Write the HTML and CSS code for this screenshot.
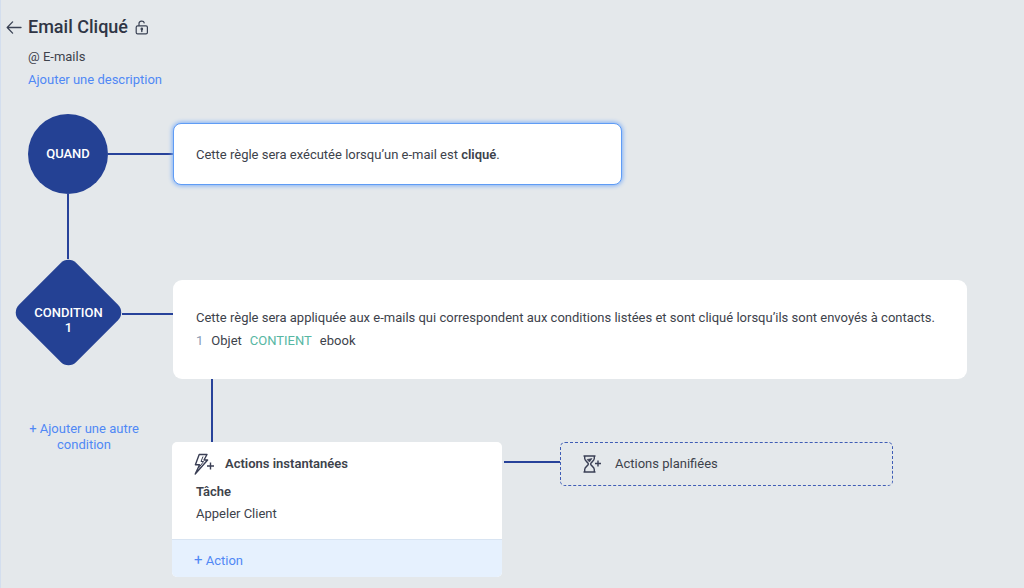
FILE: index.html
```html
<!DOCTYPE html>
<html lang="fr">
<head>
<meta charset="utf-8">
<meta name="viewport" content="width=device-width, initial-scale=1">
<title>Email Cliqué</title>
<link rel="stylesheet" href="styles.css">
</head>
<body>
<header class="header">
  <div class="title-row">
    <button class="icon-button" type="button" aria-label="Retour">
      <svg width="16" height="14" viewBox="0 0 16 14" fill="none" stroke="#3a4254" stroke-width="1.3" stroke-linecap="round" stroke-linejoin="round"><path d="M15 7.500H1.200M6.600 1.900 1.200 7.500l5.400 5.600"/></svg>
    </button>
    <h1 class="title">Email Cliqué</h1>
    <svg class="lock" width="14" height="15" viewBox="0 0 14 15" fill="none" stroke="#3a4254" stroke-width="1.2" stroke-linecap="round"><rect x="1.2" y="5.8" width="11.2" height="8" rx="1.4"/><path d="M4 5.6V3.6C4 .3 8.900.3 9.200 2.900"/><path d="M6.800 9.400v2.200" stroke-width="1.400"/><circle cx="6.800" cy="8.900" r=".7"/></svg>
  </div>
  <p class="module">@ E-mails</p>
  <a class="link description" href="#">Ajouter une description</a>
</header>
<main class="flow">
  <section class="row row-when">
    <div class="circle">QUAND</div>
    <div class="line-h line-when"></div>
    <div class="card card-when">Cette règle sera exécutée lorsqu’un e-mail est <b>cliqué</b>.</div>
  </section>
  <div class="line-v line-down"></div>
  <section class="row row-condition">
    <div class="diamond"><span class="diamond-label">CONDITION<br>1</span></div>
    <div class="line-h line-condition"></div>
    <div class="card card-condition">
      <p class="text">Cette règle sera appliquée aux e-mails qui correspondent aux conditions listées et sont cliqué lorsqu’ils sont envoyés à contacts.</p>
      <p class="criteria"><span class="index">1</span><span>Objet</span><span class="operator">CONTIENT</span><span>ebook</span></p>
    </div>
  </section>
  <section class="row">
    <div class="side"><a class="link add-condition" href="#">+ Ajouter une autre condition</a></div>
    <div class="branch">
      <div class="line-v line-branch"></div>
      <div class="row">
        <div class="actions">
          <div class="actions-body">
            <h2 class="actions-title">
              <svg width="21" height="22" viewBox="0 0 21 22" fill="none" stroke="#3a3f55" stroke-width="1.4" stroke-linejoin="round"><path d="M5.200 1.500H13l-3 5.500h3.600L1.200 21 5.600 11.800H1.400z"/><path d="M9 3.500 7 8.500h2.600L4.600 15" stroke-width="1"/><path d="M13 13h7M16.500 9.500v7"/></svg>
              Actions instantanées
            </h2>
            <h3 class="task">Tâche</h3>
            <p class="task-name">Appeler Client</p>
          </div>
          <button class="add-action" type="button"><span class="plus">+</span> Action</button>
        </div>
        <div class="line-h line-planned"></div>
        <button class="planned" type="button">
          <svg width="18" height="18" viewBox="0 0 18 18" fill="none" stroke="#3a3f55" stroke-width="1.4" stroke-linejoin="round"><path d="M.5 1h12M.5 17h12M1.700 1v2.600C1.700 6.200 5.400 7.300 5.400 9S1.700 11.800 1.700 14.400V17M11.300 1v2.600C11.300 6.200 7.600 7.300 7.600 9s3.700 2.800 3.700 5.400V17"/><path d="M4 4.500 9 3.500 6.500 7z" fill="#3a3f55" stroke-width=".6"/><path d="M12 8.500h6M15 5.500v6"/></svg>
          Actions planifiées
        </button>
      </div>
    </div>
  </section>
</main>
</body>
</html>
```
FILE: styles.css
```css
* { box-sizing: border-box; }
body {
  margin: 0;
  min-height: 100vh;
  background: #e4e8eb;
  box-shadow: inset 1px 0 #d3deee;
  color: #3d424b;
  font: 13px/20px Roboto, "Liberation Sans", sans-serif;
}
h1, h2, h3, p { margin: 0; }
button {
  font: inherit;
  color: inherit;
  background: none;
  border: 0;
  padding: 0;
  cursor: pointer;
}
.link { color: #5088f5; text-decoration: none; }
.header { padding: 15px 28px 0 6px; }
.title-row { display: flex; align-items: center; height: 24px; }
.icon-button { display: flex; width: 22px; }
.title { font-size: 18px; line-height: 24px; font-weight: 500; color: #2f3545; }
.lock { margin-left: 7px; }
.module { margin: 8px 0 0 22px; }
.description { display: block; margin: 3px 0 0 22px; }
.flow { padding: 24px 0 11px; }
.row { display: flex; align-items: flex-start; }
.line-h { flex: none; height: 2px; background: #27429a; }
.line-v { width: 2px; background: #27429a; }
.card { min-width: 0; background: #fff; border-radius: 9px; }

.row-when { padding-left: 28px; align-items: center; }
.circle {
  display: grid;
  place-items: center;
  flex: none;
  width: 80px;
  height: 80px;
  border-radius: 50%;
  background: #244194;
  color: #fff;
  font-weight: 500;
}
.line-when { width: 65px; }
.card-when {
  flex: 0 1 449px;
  padding: 21px 22px 19px;
  border: 1px solid #5f9cf5;
  border-radius: 8px;
  box-shadow: 0 0 4px 1px #82b1f7;
}
.card-when b { font-weight: 600; }
.line-down { height: 65px; margin-left: 67px; }

.row-condition { padding: 0 57px 0 15px; }
.diamond {
  position: relative;
  display: grid;
  place-items: center;
  flex: none;
  width: 107px;
  height: 107px;
  color: #fff;
  font-weight: 500;
  line-height: 15px;
  text-align: center;
}
.diamond::before {
  content: "";
  position: absolute;
  inset: 13px;
  border-radius: 11px;
  background: #244194;
  transform: rotate(45deg);
}
.diamond-label { position: relative; padding-top: 14px; }
.line-condition { width: 51px; margin-top: 54px; }
.card-condition { flex: 1; margin-top: 21px; padding: 28px 23px; }
.criteria { display: flex; gap: 8px; margin-top: 3px; }
.index { color: #8a9bb5; }
.operator { color: #57b7a3; }

.side { flex: none; width: 172px; padding: 42px 26px 0 22px; text-align: center; line-height: 16px; }
.add-condition { display: block; }
.plus { font-size: 15px; line-height: 16px; }
.branch { flex: 1; min-width: 0; }
.line-branch { height: 63px; margin-left: 39px; }
.actions { flex: 0 1 330px; border-radius: 5px; overflow: hidden; background: #fff; }
.actions-body { padding: 11px 22px 15px 24px; }
.actions-title {
  display: flex;
  align-items: center;
  gap: 10px;
  height: 22px;
  font-size: 13px;
  font-weight: 600;
  margin-left: -2px;
}
.task { margin-top: 7px; font-size: 13px; line-height: 20px; font-weight: 600; }
.task-name { margin-top: 2px; }
.add-action {
  display: block;
  width: 100%;
  height: 38px;
  padding-left: 22px;
  padding-top: 4px;
  border-top: 1px solid #d8e4f2;
  background: #e6f1fe;
  color: #5088f5;
  text-align: left;
}
.line-planned { width: 56px; margin: 19px 0 0 2px; }
.planned {
  display: flex;
  align-items: center;
  gap: 14px;
  flex: 0 1 333px;
  height: 44px;
  padding-left: 22px;
  border: 1px dashed #3f5db5;
  border-radius: 5px;
}
```
